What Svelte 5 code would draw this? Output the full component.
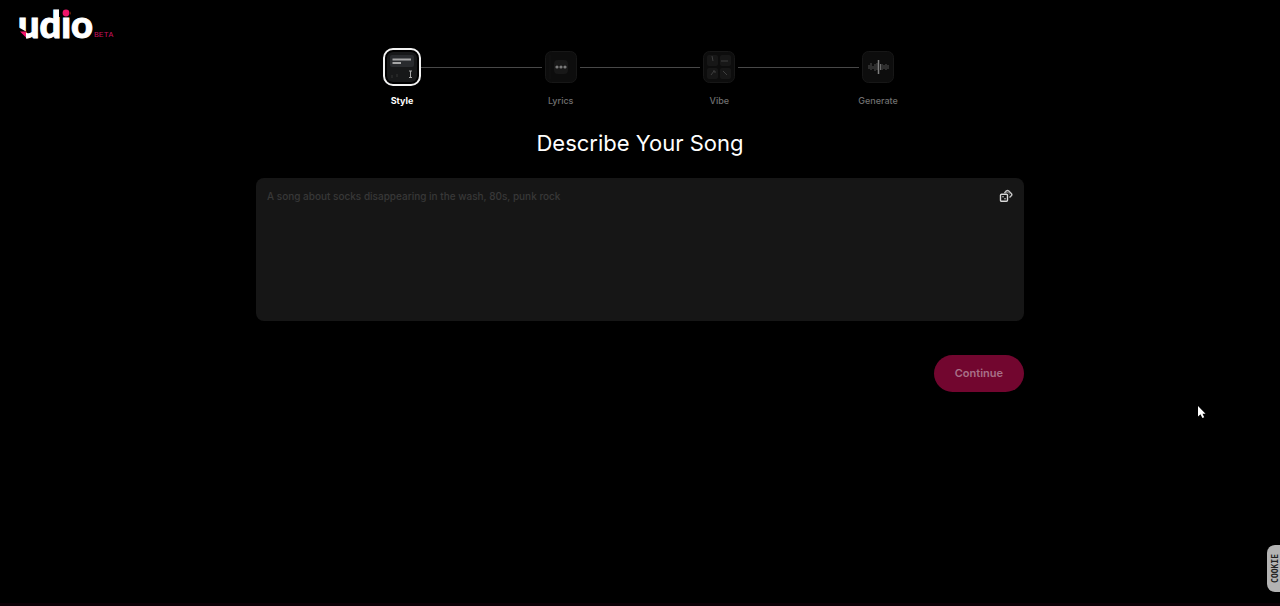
<script>
  const steps = ['Style', 'Lyrics', 'Vibe', 'Generate'];
  let active = $state(0);
  let prompt = $state('');
</script>

<div class="page">
  <header>
    <a class="brand" href="/" aria-label="udio beta">
      <span class="word">udio
        <svg class="accent" viewBox="0 0 74 32" aria-hidden="true">
          <path d="M0 20L8 24.500V32H0Z" fill="#000" />
          <path d="M2 24.500H8V30.500Z" fill="#f0146a" />
          <rect x="41" y="0" width="11" height="10" fill="#000" />
          <circle cx="48" cy="6" r="3.400" fill="#f0146a" />
        </svg>
      </span>
      <span class="beta">BETA</span>
    </a>
  </header>

  <main>
    <ol class="steps">
      {#each steps as step, i}
        {#if i > 0}<li class="line" aria-hidden="true"></li>{/if}
        <li>
          <button class="step" class:active={active === i} onclick={() => (active = i)}>
            <span class="tile">
              <svg viewBox="0 0 32 32" aria-hidden="true">
                {#if i === 0}
                  <rect x="1" y="1" width="30" height="30" rx="6" fill="#171819" />
                  <rect x="4" y="4" width="24" height="12" rx="2" fill="#292b2e" />
                  <path d="M6.500 8.500H25" stroke="#a6a6a6" stroke-width="2" />
                  <path d="M6.500 12H15" stroke="#a6a6a6" stroke-width="2" />
                  <path d="M23 20H26M24.500 20V26M23 26.500H26" stroke="#aaa" fill="none" />
                  <path d="M6 24V27M11 23V26" stroke="#343434" />
                {:else}
                  <rect x="0.500" y="0.500" width="31" height="31" rx="6" fill="#0d0d0d" stroke="#171717" />
                  {#if i === 1}
                    <rect x="9" y="9" width="14" height="14" rx="4" fill="#181818" />
                    <path d="M5 4V28" stroke="#131313" />
                    <circle cx="12" cy="16" r="1.600" fill="#7a7a7a" />
                    <circle cx="16" cy="16" r="1.600" fill="#7a7a7a" />
                    <circle cx="20" cy="16" r="1.600" fill="#7a7a7a" />
                  {:else if i === 2}
                    <g fill="#171717">
                      <rect x="4" y="4" width="11" height="11" rx="2" />
                      <rect x="17" y="4" width="11" height="11" rx="2" />
                      <rect x="4" y="17" width="11" height="11" rx="2" />
                      <rect x="17" y="17" width="11" height="11" rx="2" />
                    </g>
                    <path d="M9 5L10 10M18 10H25M8 24L11 20M10 20H12V22M20 20L24 24" stroke="#3e3e3e" fill="none" />
                  {:else}
                    <path d="M7 14V18M9 12V19M11 15V18M13 13V20M15 12V19M20 13V19M22 14V18M24 13V19M26 14V18" stroke="#505050" fill="none" />
                    <path d="M16.500 9V23" stroke="#808080" stroke-width="1.500" />
                    <path d="M18.500 13V19" stroke="#686868" />
                  {/if}
                {/if}
              </svg>
            </span>
            <span class="label">{step}</span>
          </button>
        </li>
      {/each}
    </ol>

    <h1><label for="prompt">Describe Your Song</label></h1>

    <div class="field">
      <textarea
        id="prompt"
        bind:value={prompt}
        placeholder="A song about socks disappearing in the wash, 80s, punk rock"
      ></textarea>
      <button class="dice" aria-label="Random prompt">
        <svg viewBox="0 0 14 14" aria-hidden="true">
          <path d="M5.500 4L7.500 1.700Q8.500 1 9.500 1.700L12.500 4.700Q13.200 5.500 12.500 6.500L10.500 8.500" fill="none" stroke="#c8c8c8" stroke-width="1.400" stroke-linejoin="round" />
          <path d="M6.500 4L8.500 2L11 5L10 6L9.500 4Z" fill="#707070" />
          <rect x="1.500" y="5.200" width="7" height="7" rx="1" fill="#161616" stroke="#d8d8d8" stroke-width="1.400" />
          <circle cx="4" cy="7.700" r=".8" fill="#ccc" />
          <circle cx="6" cy="9.700" r=".8" fill="#ccc" />
        </svg>
      </button>
    </div>

    <div class="actions">
      <button class="continue">Continue</button>
    </div>
  </main>

  <button class="cookie">COOKIE</button>

  <svg class="pointer" viewBox="0 0 10 14" aria-hidden="true">
    <path d="M1 1V11.500L3.500 9.300L5.400 13L7.200 12.200L5.500 8.800H8.500Z" fill="#fff" />
  </svg>
</div>

<style>
  :global(body) {
    background: #000;
  }
  .page {
    position: relative;
    box-sizing: border-box;
    min-height: 100vh;
    overflow: hidden;
    background: #000;
    border-bottom: 3px solid #0c0006;
    color: #fff;
    font-family: Inter, 'Liberation Sans', sans-serif;
  }
  button {
    border: 0;
    padding: 0;
    font: inherit;
    color: inherit;
    background: none;
    cursor: pointer;
  }
  header {
    display: flex;
    height: 48px;
    padding-left: 18px;
  }
  .brand {
    display: flex;
    align-items: flex-start;
    gap: 1px;
    color: #fff;
    text-decoration: none;
  }
  .word {
    position: relative;
    padding-top: 3px;
    font: 900 38px/40px Lato, sans-serif;
    -webkit-text-stroke: 1px #fff;
  }
  .accent {
    position: absolute;
    left: 0;
    top: 7px;
    width: 74px;
    height: 32px;
  }
  .beta {
    padding-top: 29px;
    color: #c4125a;
    font: 8px/12px 'Liberation Mono', monospace;
  }
  main {
    max-width: 768px;
    margin: 0 auto;
  }
  .steps {
    display: flex;
    max-width: 514px;
    margin: 0 auto;
    padding: 0;
    list-style: none;
  }
  .line {
    flex: 1;
    height: 1px;
    margin-top: 19px;
    background: #484848;
  }
  .step {
    display: flex;
    flex-direction: column;
    align-items: center;
    gap: 8px;
    width: 38px;
    color: #707070;
    font-weight: 500;
  }
  .tile {
    box-sizing: border-box;
    display: flex;
    width: 38px;
    height: 38px;
    padding: 1px;
    border: 2px solid transparent;
    border-radius: 10px;
  }
  .tile svg {
    width: 100%;
  }
  .active {
    color: #fff;
    font-weight: 700;
  }
  .active .tile {
    border-color: #f2f2f2;
  }
  .label {
    font-size: 9px;
    line-height: 14px;
    white-space: nowrap;
  }
  h1 {
    margin: 19px 0;
    text-align: center;
    font-size: 22px;
    line-height: 32px;
    font-weight: 400;
  }
  .field {
    display: flex;
    align-items: flex-start;
    height: 143px;
    border-radius: 8px;
    background: #161616;
  }
  textarea {
    flex: 1;
    align-self: stretch;
    box-sizing: border-box;
    padding: 10px 11px;
    border: 0;
    outline: 0;
    resize: none;
    background: none;
    color: #ddd;
    font: 500 10px/16px Inter, sans-serif;
  }
  textarea::placeholder {
    color: #383838;
    opacity: 1;
  }
  .dice {
    display: flex;
    margin: 11px 11px 0 0;
  }
  .dice svg {
    width: 14px;
    height: 14px;
  }
  .actions {
    display: flex;
    justify-content: flex-end;
    margin-top: 34px;
  }
  .continue {
    padding: 0 21px;
    border-radius: 19px;
    background: #72062f;
    color: #a87088;
    font-size: 11px;
    font-weight: 600;
    line-height: 37px;
  }
  .cookie {
    position: absolute;
    right: 0;
    bottom: 11px;
    width: 13px;
    height: 47px;
    padding-left: 3px;
    border-radius: 8px 0 0 8px;
    background: #b3b3b3;
    color: #222;
    font: 700 8px/12px 'DejaVu Sans Mono', monospace;
    writing-mode: sideways-lr;
    text-align: center;
  }
  .pointer {
    position: absolute;
    left: 1197px;
    top: 405px;
    width: 10px;
    height: 14px;
  }
</style>
